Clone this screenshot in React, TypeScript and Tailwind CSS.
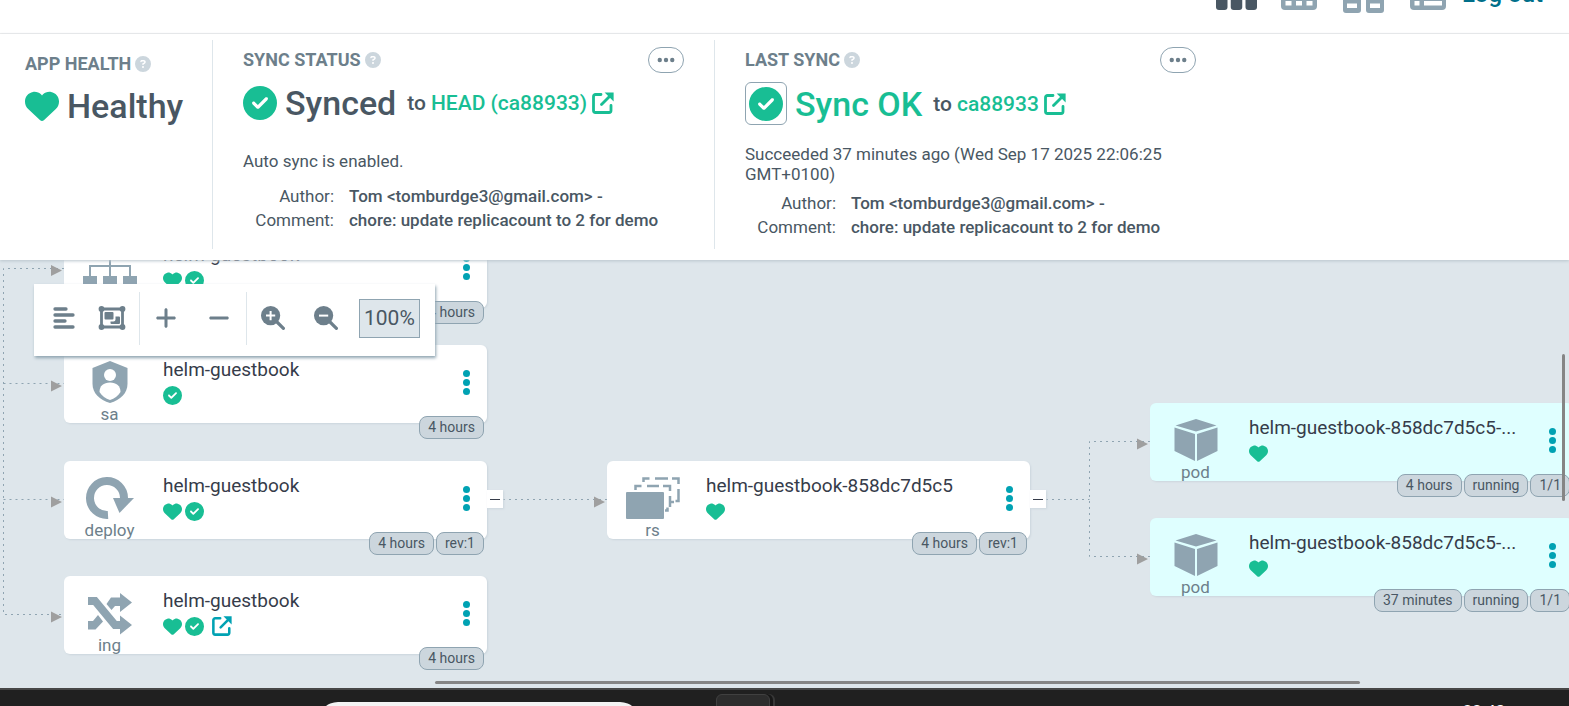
import React from "react";
import { FaHeart, FaCircleCheck, FaCircleQuestion, FaPlus, FaMinus, FaEllipsis } from "react-icons/fa6";

function LinkIcon({ className }: { className: string }) {
  return (
    <svg viewBox="0 0 22 22" className={className} fill="none" stroke="currentColor" aria-hidden="true">
      <path d="M9 2.500H3.500a2 2 0 0 0-2 2v14a2 2 0 0 0 2 2H17a2 2 0 0 0 2-2v-5" strokeWidth="2.8" strokeLinecap="round" />
      <path d="M9.500 12.500 18 4" strokeWidth="2.8" strokeLinecap="round" />
      <path d="M12.600 0.400h9v9z" fill="currentColor" stroke="none" />
    </svg>
  );
}

function ZoomIcon({ plus }: { plus: boolean }) {
  return (
    <svg viewBox="0 0 24 24" className="size-6" aria-hidden="true">
      <circle cx="9.6" cy="9.6" r="9.6" fill="#6d7f8b" />
      <path d="m15 15 7.4 7.4" stroke="#6d7f8b" strokeWidth="3.2" strokeLinecap="round" />
      <path d={plus ? "M5 9.6h9.2M9.6 5v9.2" : "M5 9.6h9.2"} stroke="#fff" strokeWidth="2" />
    </svg>
  );
}

function AlignIcon() {
  return (
    <svg viewBox="0 0 24 24" className="size-6" fill="none" stroke="currentColor" strokeWidth="3.300" strokeLinecap="round" aria-hidden="true">
      <path d="M3 3h11M3 9h18M3 15h10M3 21h18" />
    </svg>
  );
}

function GroupIcon() {
  return (
    <svg viewBox="0 0 28 24" className="h-6 w-7" fill="currentColor" aria-hidden="true">
      <path d="M3.500 3h21v18h-21z" fill="none" stroke="currentColor" strokeWidth="2.800" />
      <circle cx="3.500" cy="3" r="2.900" />
      <circle cx="24.500" cy="3" r="2.900" />
      <circle cx="3.500" cy="21" r="2.900" />
      <circle cx="24.500" cy="21" r="2.900" />
      <rect x="6.500" y="6" width="9" height="7.500" rx="1" />
      <path d="M17.500 10.500H21a1 1 0 0 1 1 1v5.500a1 1 0 0 1-1 1h-7.500a1 1 0 0 1-1-1v-1.500h3a2 2 0 0 0 2-2z" />
    </svg>
  );
}

type Kind = "svc" | "sa" | "deploy" | "ing" | "rs" | "pod";

function KindIcon({ kind }: { kind: Kind }) {
  return (
    <svg viewBox="0 0 56 44" className="h-11 w-14 shrink-0" fill="#8fa4b1" aria-hidden="true">
      {kind === "svc" && (
        <>
          <path d="M20 0h16v11H20zM1 31h14v13H1zM21 31h14v13H21zM41 31h14v13H41z" />
          <path d="M28 9v22M8 31V21h40v10" fill="none" stroke="#8fa4b1" strokeWidth="2" />
        </>
      )}
      {kind === "sa" && (
        <>
          <path d="M28 1 45.500 8v16c0 9-7 16-17.500 19C17.500 40 10.500 33 10.500 24V8z" />
          <circle cx="28" cy="15" r="6" fill="#fff" />
          <path d="M17.500 32c0-6 4-9.500 10.500-9.500S38.500 26 38.500 32c-2.500 4-6 6.500-10.500 8-4.500-1.500-8-4-10.500-8z" fill="#fff" />
        </>
      )}
      {kind === "deploy" && (
        <>
          <path d="M26 39A17 17 0 1 1 42 22" fill="none" stroke="#8fa4b1" strokeWidth="8" />
          <path d="M31 22h21L37.500 37z" />
        </>
      )}
      {kind === "ing" && (
        <>
          <path d="M6 10h7l20 24h6" fill="none" stroke="#8fa4b1" strokeWidth="8" />
          <path d="M38 2 50 11.500 38 21zM38 24.500 50 34 38 43.500z" />
          <path d="M38 6.500h-9L24.500 13l5 6 3.500-4h5zM6 30h5l5-6 5 6.500-7.500 8H6z" />
        </>
      )}
      {kind === "rs" && (
        <>
          <rect x="1" y="16" width="38" height="27" rx="1" />
          <path d="M10.500 14v-4h6M22 10h12M38 10h7v5M45 20v11M49 26h-4M40 34.500h2.500v-3" fill="none" stroke="#8fa4b1" strokeWidth="2.500" />
          <path d="M18.500 6V2.500h6M30 2.500h13M47 2.500h6.500V8M53.500 13v12h-3" fill="none" stroke="#8fa4b1" strokeWidth="2.500" />
        </>
      )}
      {kind === "pod" && (
        <path d="M28 1 48.500 7.500 28 13.500 7.500 7.500zM6.500 9.500 27 16v27L6.500 33zM49.500 9.500 29 16v27l20.500-10z" />
      )}
    </svg>
  );
}

interface NodeProps {
  kind: Kind;
  name: string;
  tags: string[];
  healthy?: boolean;
  synced?: boolean;
  link?: boolean;
  place: string;
  expandable?: boolean;
}

function ResourceNode({ kind, name, tags, healthy, synced, link, place, expandable }: NodeProps) {
  return (
    <article className={`absolute h-[78px] w-[423px] rounded-md shadow-[1px_1px_2px_#ccd6dd] ${kind === "pod" ? "bg-[#dfffff]" : "bg-white"} ${place}`}>
      <div className="flex h-full">
        <div className="flex w-[91px] flex-col items-center pt-[15px]">
          <KindIcon kind={kind} />
          <span className="text-[17px] leading-5 text-[#6d7f8b]">{kind}</span>
        </div>
        <div className="w-[280px] shrink-0 pt-[13px] pl-2">
          <div className="text-[19px] leading-6 whitespace-nowrap text-[#363c4a]">{name}</div>
          <div className="mt-[3px] flex h-5 items-center gap-[3px] text-[#18be94]">
            {healthy && <FaHeart className="size-[19px]" aria-label="Healthy" />}
            {synced && <FaCircleCheck className="size-[19px]" aria-label="Synced" />}
            {link && (
              <a href="#open" aria-label="Open application" className="ml-[5px] text-[#00a2b3]">
                <LinkIcon className="size-5" />
              </a>
            )}
          </div>
        </div>
        <button aria-label={`Actions for ${name}`} className="mr-px ml-auto flex w-10 flex-col items-center justify-center gap-[2px] pb-1">
          <i className="size-[7px] rounded-full bg-[#00a2b3]" />
          <i className="size-[7px] rounded-full bg-[#00a2b3]" />
          <i className="size-[7px] rounded-full bg-[#00a2b3]" />
        </button>
      </div>
      <div className="absolute top-[71px] right-[3px] flex gap-[2px]">
        {tags.map((t) => (
          <span key={t} className="rounded-lg border border-[#8fa4b1] bg-[#ccd6dd] px-2 text-sm leading-[21px] whitespace-nowrap text-[#495763]">{t}</span>
        ))}
      </div>
      {expandable && (
        <button aria-label="Collapse" className="absolute top-[29px] left-[423px] flex h-[18px] w-4 items-center justify-center bg-white shadow-[1px_1px_2px_#ccd6dd]">
          <span className="h-px w-2.5 bg-[#363c4a]" />
        </button>
      )}
    </article>
  );
}

function Heading({ children }: { children: string }) {
  return (
    <h2 className="flex items-center gap-1 text-lg leading-5 font-bold text-[#6d7f8b]">
      {children}
      <FaCircleQuestion className="size-4 text-[#ccd6dd]" />
    </h2>
  );
}

function More() {
  return (
    <button aria-label="More" className="flex h-[26px] w-9 items-center justify-center rounded-full border border-[#8fa4b1] text-[#6d7f8b]">
      <FaEllipsis className="size-5" />
    </button>
  );
}

function Commit() {
  return (
    <dl className="grid grid-cols-[91px_1fr] gap-x-[15px] text-[17px] leading-6">
      <dt className="text-right">Author:</dt>
      <dd className="font-medium whitespace-nowrap">Tom &lt;tomburdge3@gmail.com&gt; -</dd>
      <dt className="text-right">Comment:</dt>
      <dd className="font-medium whitespace-nowrap">chore: update replicacount to 2 for demo</dd>
    </dl>
  );
}

function Edges() {
  return (
    <svg className="absolute top-0 left-0 h-[427px] w-[1569px]" fill="none" aria-hidden="true">
      <path d="M64 8.500H3.500V354.500H64M3.500 123.500H64M3.500 239.500H64M503 239.500H607M1046 239.500H1089.500M1150 181.500H1089.500V296.500H1150" stroke="#8fa4b1" strokeDasharray="2 4" />
      <path d="M51 5v11l11-5.500zM51 120.500v11l11-5.500zM51 236.500v11l11-5.500zM51 351.500v11l11-5.500zM594 236.500v11l11-5.500zM1137 178.500v11l11-5.500zM1137 293.500v11l11-5.500z" fill="#9f9f9f" />
    </svg>
  );
}

export default function App() {
  return (
    <div className="flex h-screen flex-col overflow-hidden bg-white font-['Roboto',sans-serif] text-[#495763]">
      <header className="flex h-[34px] shrink-0 items-start justify-end border-b border-[#eeeeee] pr-[26px]">
        <nav className="flex items-start text-[#8fa4b1]">
          <button aria-label="Tree" className="mr-6">
            <svg viewBox="0 0 41 11" className="h-[11px] w-[41px]" fill="#495763"><rect y="-4" width="11.500" height="14" rx="3" /><rect x="14.750" y="-4" width="11.500" height="14" rx="3" /><rect x="29.500" y="-4" width="11.500" height="14" rx="3" /></svg>
          </button>
          <button aria-label="Pods" className="mr-[26px]">
            <svg viewBox="0 0 36 11" className="h-[11px] w-9"><rect y="-10" width="36" height="20" rx="4" fill="currentColor" /><path d="M4.500 1h6v4.500h-6zM15 1h6v4.500h-6zM25.500 1h6v4.500h-6z" fill="#fff" /></svg>
          </button>
          <button aria-label="Network" className="mr-[26px]">
            <svg viewBox="0 0 41 13" className="h-[13px] w-[41px]"><path d="M0-2h18v12a3 3 0 0 1-3 3H3a3 3 0 0 1-3-3zM23-2h18v12a3 3 0 0 1-3 3H26a3 3 0 0 1-3-3z" fill="currentColor" /><path d="M4 3.500h10v4.500H4zM27 3.500h10v4.500H27z" fill="#fff" /></svg>
          </button>
          <button aria-label="List" className="mr-4">
            <svg viewBox="0 0 36 11" className="h-[11px] w-9"><rect y="-10" width="36" height="20" rx="4" fill="currentColor" /><path d="M4.500 1h5v4.500h-5zM14 1h18v4.500H14z" fill="#fff" /></svg>
          </button>
          <a href="#logout" className="-mt-[18px] text-2xl leading-6 font-medium text-[#006f8a]">Log out</a>
        </nav>
      </header>

      <section className="z-10 flex h-[226px] shrink-0 bg-white pt-1.5 pb-[11px] shadow-[0_1px_3px_#b8c4cc]">
        <div className="w-[212px] pt-3.5 pl-[25px]">
          <Heading>APP HEALTH</Heading>
          <div className="mt-[11px] flex items-center gap-2 text-[34px] leading-[42px] font-medium">
            <FaHeart className="size-[34px] text-[#18be94]" />Healthy
          </div>
        </div>
        <div className="w-[503px] border-x border-[#dee6eb] pr-[30px] pl-[30px]">
          <div className="flex items-start justify-between pt-[7px]">
            <div className="pt-[3px]"><Heading>SYNC STATUS</Heading></div>
            <More />
          </div>
          <div className="mt-[9px] flex items-center text-[34px] leading-[42px] font-medium">
            <FaCircleCheck className="mr-2 size-[34px] text-[#18be94]" />Synced
            <span className="ml-[11px] flex items-center gap-[5px] text-[21px]">to
              <a href="#head" className="flex items-center gap-[5px] text-[#18be94]">HEAD (ca88933)<LinkIcon className="size-[22px]" /></a>
            </span>
          </div>
          <p className="mt-[27px] mb-[13px] text-[17px] leading-5">Auto sync is enabled.</p>
          <Commit />
        </div>
        <div className="w-[481px] pl-[30px]">
          <div className="flex items-start justify-between pt-[7px]">
            <div className="pt-[3px]"><Heading>LAST SYNC</Heading></div>
            <More />
          </div>
          <div className="mt-[9px] flex items-center text-[34px] leading-[42px] font-medium text-[#18be94]">
            <span className="mr-2 flex h-[43px] w-[42px] items-center justify-center rounded-md border border-[#8fa4b1]"><FaCircleCheck className="size-[34px]" /></span>Sync OK
            <span className="ml-[11px] flex items-center gap-[5px] text-[21px] text-[#495763]">to
              <a href="#revision" className="flex items-center gap-[5px] text-[#18be94]">ca88933<LinkIcon className="size-[22px]" /></a>
            </span>
          </div>
          <p className="mt-[19px] mb-[7px] text-[17px] leading-5">Succeeded 37 minutes ago (Wed Sep 17 2025 22:06:25 GMT+0100)</p>
          <Commit />
        </div>
      </section>

      <main className="relative min-h-0 flex-1 overflow-hidden bg-[#dee6eb]">
        <Edges />
        <ResourceNode kind="svc" name="helm-guestbook" tags={["4 hours"]} healthy synced place="left-16 top-[-30px]" />
        <ResourceNode kind="sa" name="helm-guestbook" tags={["4 hours"]} synced place="left-16 top-[85px]" />
        <ResourceNode kind="deploy" name="helm-guestbook" tags={["4 hours", "rev:1"]} healthy synced expandable place="left-16 top-[201px]" />
        <ResourceNode kind="ing" name="helm-guestbook" tags={["4 hours"]} healthy synced link place="left-16 top-[316px]" />
        <ResourceNode kind="rs" name="helm-guestbook-858dc7d5c5" tags={["4 hours", "rev:1"]} healthy expandable place="left-[607px] top-[201px]" />
        <ResourceNode kind="pod" name="helm-guestbook-858dc7d5c5-..." tags={["4 hours", "running", "1/1"]} healthy place="left-[1150px] top-[143px]" />
        <ResourceNode kind="pod" name="helm-guestbook-858dc7d5c5-..." tags={["37 minutes", "running", "1/1"]} healthy place="left-[1150px] top-[258px]" />

        <div role="toolbar" className="absolute top-6 left-[34px] flex h-[72px] w-[401px] items-center bg-white pb-1 text-[#6d7f8b] shadow-[1px_2px_3px_#8fa4b1]">
          <button aria-label="Align" className="ml-[18px]"><AlignIcon /></button>
          <button aria-label="Group" className="ml-[22px]"><GroupIcon /></button>
          <span className="ml-[13px] h-[53px] w-px bg-[#dee6eb]" />
          <button aria-label="Expand all" className="ml-[14px]"><FaPlus className="size-6" /></button>
          <button aria-label="Collapse all" className="ml-[29px]"><FaMinus className="size-6" /></button>
          <span className="ml-[15px] h-[53px] w-px bg-[#dee6eb]" />
          <button aria-label="Zoom in" className="ml-[14px]"><ZoomIcon plus /></button>
          <button aria-label="Zoom out" className="ml-[29px]"><ZoomIcon plus={false} /></button>
          <output className="ml-[21px] border border-[#8fa4b1] bg-[#dee6eb] px-1 text-[21px] leading-[37px] text-[#495763]">100%</output>
        </div>
        <div className="absolute top-[94px] right-1 h-[147px] w-[3px] rounded-full bg-[#858585]" />
        <div className="absolute bottom-1 left-[435px] h-[3px] w-[925px] rounded-full bg-[#858585]" />
      </main>

      <footer className="flex h-[18px] shrink-0 items-start overflow-hidden border-t-2 border-[#474747] bg-[#202020] pr-16">
        <div className="mt-3 ml-[318px] h-10 w-[322px] shrink-0 rounded-[20px] bg-[#f3f3f3]" />
        <div className="mt-1 ml-[76px] h-10 w-[54px] shrink-0 rounded-md border border-[#404040] bg-[#2d2d2d] shadow-[3px_0_0_#181818,5px_0_0_#383838]" />
        <time className="mt-[11px] ml-auto text-[17px] leading-5 text-white">22:43</time>
      </footer>
    </div>
  );
}
